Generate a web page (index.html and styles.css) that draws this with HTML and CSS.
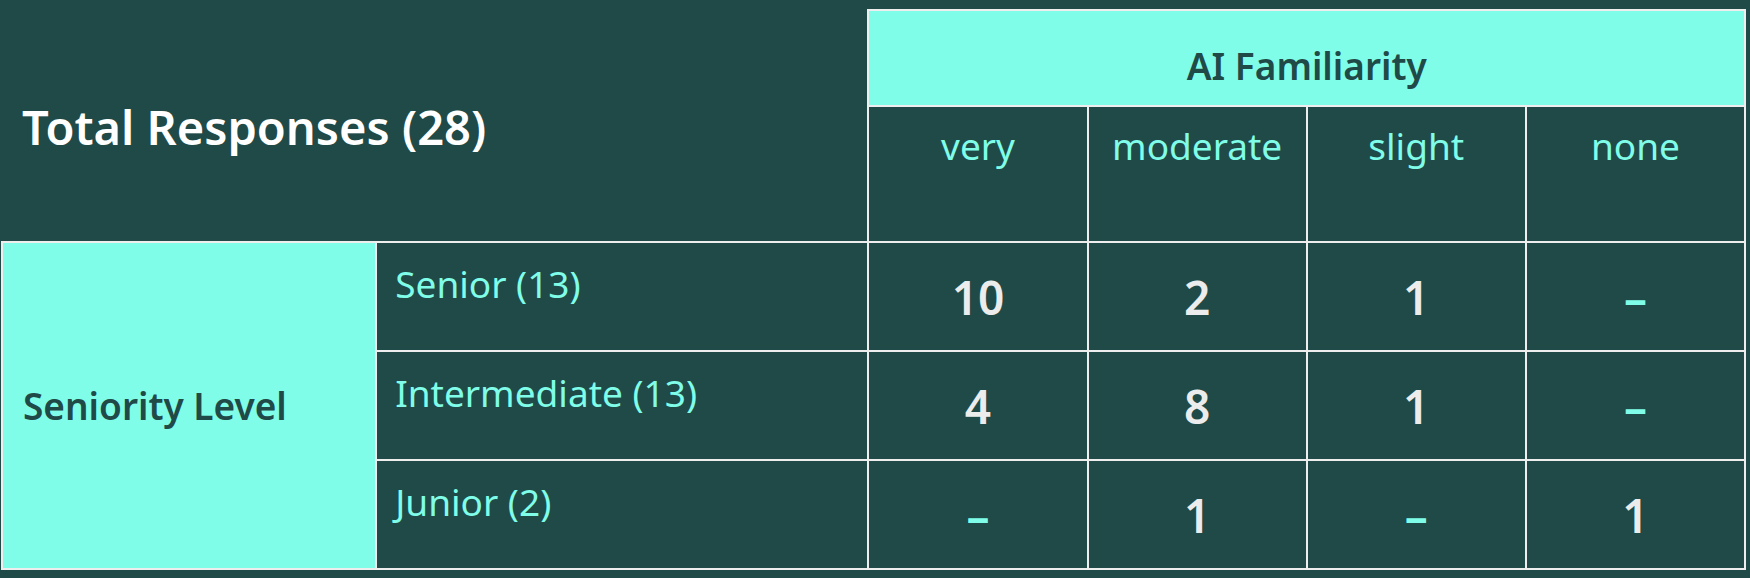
FILE: index.html
```html
<!DOCTYPE html>
<html>
<head>
<meta charset="utf-8">
<link rel="stylesheet" href="styles.css">
</head>
<body>
<table class="grid">
  <colgroup>
    <col class="c-group">
    <col class="c-level">
    <col class="c-val">
    <col class="c-val">
    <col class="c-val">
    <col class="c-val">
  </colgroup>
  <thead>
    <tr class="row-top">
      <th class="total" colspan="2" rowspan="2">Total Responses (28)</th>
      <th class="fam" colspan="4">AI Familiarity</th>
    </tr>
    <tr class="row-sub">
      <th class="sub">very</th>
      <th class="sub">moderate</th>
      <th class="sub">slight</th>
      <th class="sub">none</th>
    </tr>
  </thead>
  <tbody>
    <tr class="row-body">
      <th class="group" rowspan="3">Seniority Level</th>
      <th class="level">Senior (13)</th>
      <td class="num">10</td>
      <td class="num">2</td>
      <td class="num">1</td>
      <td class="num dash">–</td>
    </tr>
    <tr class="row-body">
      <th class="level">Intermediate (13)</th>
      <td class="num">4</td>
      <td class="num">8</td>
      <td class="num">1</td>
      <td class="num dash">–</td>
    </tr>
    <tr class="row-body">
      <th class="level">Junior (2)</th>
      <td class="num dash">–</td>
      <td class="num">1</td>
      <td class="num dash">–</td>
      <td class="num">1</td>
    </tr>
  </tbody>
</table>
</body>
</html>
```
FILE: styles.css
```css
html, body {
  margin: 0;
  background: #1f4a47;
}
body {
  padding: 9px 0 0 1px;
  font-family: "Noto Sans", "DejaVu Sans", sans-serif;
}
.grid {
  border-collapse: collapse;
  table-layout: fixed;
  width: 1745px;
}
.c-group { width: 374px; }
.c-level { width: 492px; }
.c-val { width: 219px; }

.grid th, .grid td {
  border: 2px solid #eeeeee;
  padding: 0;
  font-weight: normal;
}
.row-top { height: 96px; }
.row-sub { height: 136px; }
.row-body { height: 109px; }

.total {
  border: none !important;
  border-bottom: 2px solid #eeeeee !important;
  text-align: left;
  vertical-align: middle;
  padding-left: 20px !important;
  padding-top: 2px !important;
  color: #ffffff;
  font-size: 47px;
  font-weight: 600 !important;
}
.fam {
  background: #80fde8;
  color: #1f4a47;
  font-size: 37px;
  font-weight: 600 !important;
  text-align: center;
  vertical-align: top;
  padding-top: 29px !important;
}
.sub {
  color: #80fde8;
  font-size: 37px;
  text-align: center;
  vertical-align: top;
  padding-top: 13px !important;
}
.group {
  background: #80fde8;
  color: #1f4a47;
  font-size: 37px;
  font-weight: 600 !important;
  text-align: left;
  vertical-align: middle;
  padding-left: 20px !important;
}
.level {
  color: #80fde8;
  font-size: 37px;
  text-align: left;
  vertical-align: top;
  padding: 15px 0 0 18px !important;
}
.num {
  color: #ececec;
  font-size: 46px;
  font-weight: 600 !important;
  text-align: center;
  vertical-align: middle;
}
.dash {
  color: #80fde8;
}
```
